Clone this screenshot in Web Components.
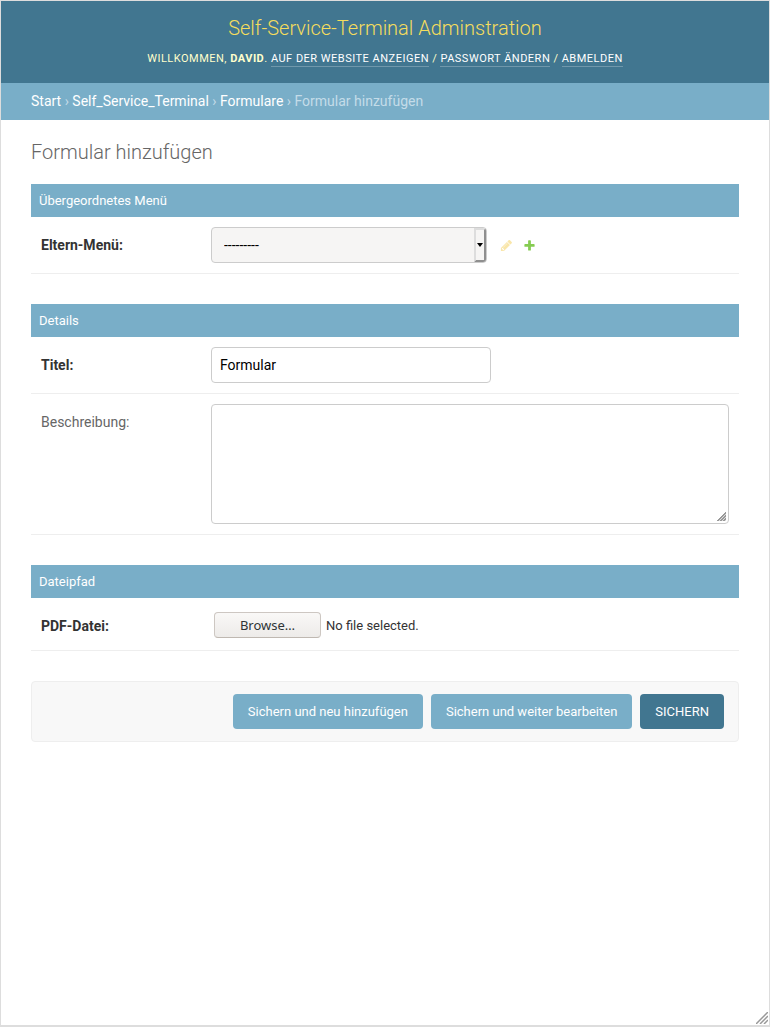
<!DOCTYPE html>
<html lang="de">
<head>
<meta charset="utf-8">
<meta name="viewport" content="width=device-width, initial-scale=1">
<title>Formular hinzufügen</title>
<style>
  body { margin: 0; background: #fff; color: #333; font: 14px/17px Roboto, "Noto Sans", sans-serif; }
</style>
</head>
<body>
<admin-page>
  <admin-header slot="header" user="David">Self-Service-Terminal Adminstration</admin-header>
  <bread-crumbs slot="header">
    <a href="#start">Start</a><a href="#app">Self_Service_Terminal</a><a href="#formulare">Formulare</a><span>Formular hinzufügen</span>
  </bread-crumbs>
  <admin-form heading="Formular hinzufügen">
    <field-set heading="Übergeordnetes Menü">
      <select-field label="Eltern-Menü:"></select-field>
    </field-set>
    <field-set heading="Details">
      <text-field label="Titel:" value="Formular"></text-field>
      <area-field label="Beschreibung:"></area-field>
    </field-set>
    <field-set heading="Dateipfad">
      <file-field label="PDF-Datei:"></file-field>
    </field-set>
    <submit-row></submit-row>
  </admin-form>
</admin-page>

<script>
  const define = (name, render, setup) => customElements.define(name, class extends HTMLElement {
    constructor() {
      super();
      this.attachShadow({ mode: 'open' });
    }
    connectedCallback() {
      if (this.shadowRoot.childNodes.length) return;
      this.shadowRoot.innerHTML = render(this);
      if (setup) setup(this.shadowRoot);
    }
  });

  // Label and control layout shared by every field row.
  const rowStyle = `
    * { box-sizing: border-box; }
    :host { display: flex; align-items: flex-start; padding: 10px; border-bottom: 1px solid #eee; }
    label { flex: 0 0 170px; padding-top: 10px; line-height: 17px; font-weight: 700; color: #333; }
    input, select, textarea { font: inherit; color: #000; border: 1px solid #ccc; border-radius: 4px; margin: 0; background: #fff; }
  `;

  define('admin-page', () => `
    <style>
      :host { display: flex; flex-direction: column; box-sizing: border-box; min-height: 100vh; position: relative;
              border: 1px solid #ddd; border-bottom-width: 2px; }
      main { padding: 20px 30px; }
      .grip { position: absolute; right: 1px; bottom: 1px; display: block; }
    </style>
    <slot name="header"></slot>
    <main><slot></slot></main>
    <svg class="grip" width="12" height="12" viewBox="0 0 12 12" fill="none" stroke="#999" stroke-width="1.5" aria-hidden="true">
      <path d="M0 12L12 0M4 12L12 4M8 12L12 8"/>
    </svg>
  `);

  define('admin-header', el => `
    <style>
      :host { display: block; padding: 15px 30px; background: #417690; color: #ffc; text-align: center; }
      h1 { margin: 0 0 10px; font-size: 20px; line-height: 24px; font-weight: 300; color: #f5dd5d; }
      nav { font-size: 11px; line-height: 18px; font-weight: 400; letter-spacing: 0.045em; text-transform: uppercase; }
      a { color: #fff; text-decoration: none; padding-bottom: 1px; border-bottom: 1px solid rgba(255,255,255,.25); }
    </style>
    <h1><slot></slot></h1>
    <nav>Willkommen, <strong>${el.getAttribute('user')}</strong>. <a href="#site">Auf der Website anzeigen</a> / <a href="#password">Passwort ändern</a> / <a href="#logout">Abmelden</a></nav>
  `);

  define('bread-crumbs', () => `
    <style>
      :host { display: block; padding: 10px 30px; background: #79aec8; color: #c4dce8; }
      a { color: #fff; text-decoration: none; }
    </style>
    <nav aria-label="Brotkrumen"></nav>
  `, root => {
    const nav = root.querySelector('nav');
    [...root.host.children].forEach((item, i) => {
      if (i) nav.append(' › ');
      nav.append(item);
    });
  });

  define('admin-form', el => `
    <style>
      :host { display: block; }
      h1 { margin: 0 0 20px; font-size: 20px; line-height: 24px; font-weight: 300; color: #666; }
      form { display: flex; flex-direction: column; gap: 30px; }
    </style>
    <h1>${el.getAttribute('heading')}</h1>
    <form><slot></slot></form>
  `);

  define('field-set', el => `
    <style>
      :host { display: block; }
      h2 { margin: 0; padding: 8px; font-size: 13px; line-height: 17px; font-weight: 400; background: #79aec8; color: #fff; }
    </style>
    <section><h2>${el.getAttribute('heading')}</h2><slot></slot></section>
  `);

  define('select-field', el => `
    <style>${rowStyle}
      .box { position: relative; flex: 0 1 276px; display: flex; }
      select { appearance: none; width: 100%; height: 36px; padding: 0 20px 0 12px; background: #f6f5f4; }
      .arrow { position: absolute; top: 1px; right: 1px; bottom: 1px; width: 12px; display: grid; place-items: center;
               border: 2px solid; border-color: #ddd #8f8f8f #8f8f8f #ddd; border-radius: 0 3px 3px 0; pointer-events: none; background: #f6f5f4; }
      .tools { display: flex; align-self: center; gap: 10px; padding-left: 13px; }
      .tools a, svg { display: block; }
      .off { opacity: .35; }
    </style>
    <label for="parent">${el.getAttribute('label')}</label>
    <div class="box">
      <select id="parent"><option>---------</option></select>
      <span class="arrow"><svg width="6" height="4" viewBox="0 0 6 4"><path d="M0 0h6L3 4z"/></svg></span>
    </div>
    <div class="tools">
      <a class="off" aria-label="Ändern"><svg width="13" height="13" viewBox="0 0 1792 1792"><path fill="#efb80b" d="M491 1536l91-91-235-235-91 91v107h128v128h107zm523-928q0-22-22-22-10 0-17 7l-542 542q-7 7-7 17 0 22 22 22 10 0 17-7l542-542q7-7 7-17zm-54-192l416 416-832 832h-416v-416zm683 96q0 53-37 90l-166 166-416-416 166-165q36-38 90-38 53 0 91 38l235 234q37 39 37 91z"/></svg></a>
      <a href="#add" aria-label="Hinzufügen"><svg width="13" height="13" viewBox="0 0 1792 1792"><path fill="#86cc52" d="M1600 796v192q0 40-28 68t-68 28h-416v416q0 40-28 68t-68 28h-192q-40 0-68-28t-28-68v-416h-416q-40 0-68-28t-28-68v-192q0-40 28-68t68-28h416v-416q0-40 28-68t68-28h192q40 0 68 28t28 68v416h416q40 0 68 28t28 68z"/></svg></a>
    </div>
  `);

  define('text-field', el => `
    <style>${rowStyle}
      input { flex: 0 1 280px; min-width: 0; height: 36px; padding: 0 8px; }
    </style>
    <label for="text">${el.getAttribute('label')}</label>
    <input id="text" type="text" value="${el.getAttribute('value')}">
  `);

  define('area-field', el => `
    <style>${rowStyle}
      label { font-weight: 400; color: #666; }
      textarea { flex: 1; min-width: 0; height: 120px; padding: 8px; resize: vertical; }
      textarea::-webkit-resizer {
        background: linear-gradient(135deg, transparent 48%, #999 48% 58%, #ddd 58% 64%, #999 64% 74%, #ddd 74% 80%, #999 80% 90%, #ddd 90%)
                    right 2px bottom 2px / 9px 9px no-repeat;
      }
    </style>
    <label for="area">${el.getAttribute('label')}</label>
    <textarea id="area"></textarea>
  `);

  define('file-field', el => `
    <style>${rowStyle}
      .picker { display: flex; align-items: center; gap: 5px; padding: 4px 3px 2px; font-size: 13px; }
      button { width: 107px; height: 26px; padding: 0; border: 1px solid #cdc7c2; border-bottom-color: #bfb8b1; border-radius: 4px;
               background: linear-gradient(#f9f8f7, #edebe9); color: #2e3436; font: 13px/17px "Noto Sans", sans-serif; }
    </style>
    <label for="browse">${el.getAttribute('label')}</label>
    <div class="picker">
      <button id="browse" type="button">Browse…</button>
      <output for="browse">No file selected.</output>
      <input type="file" hidden>
    </div>
  `, root => {
    const input = root.querySelector('input');
    root.querySelector('button').addEventListener('click', () => input.click());
    input.addEventListener('change', () => {
      root.querySelector('output').textContent = input.files.length ? input.files[0].name : 'No file selected.';
    });
  });

  define('submit-row', () => `
    <style>
      :host { display: flex; flex-wrap: wrap; justify-content: flex-end; gap: 8px; padding: 12px 14px;
              background: #f8f8f8; border: 1px solid #eee; border-radius: 4px; }
      button { height: 35px; padding: 0 15px; border: 0; border-radius: 4px; background: #79aec8; color: #fff; font: inherit; font-size: 13px; }
      .primary { background: #417690; text-transform: uppercase; }
    </style>
    <button type="button">Sichern und neu hinzufügen</button>
    <button type="button">Sichern und weiter bearbeiten</button>
    <button type="button" class="primary">Sichern</button>
  `);
</script>
</body>
</html>
